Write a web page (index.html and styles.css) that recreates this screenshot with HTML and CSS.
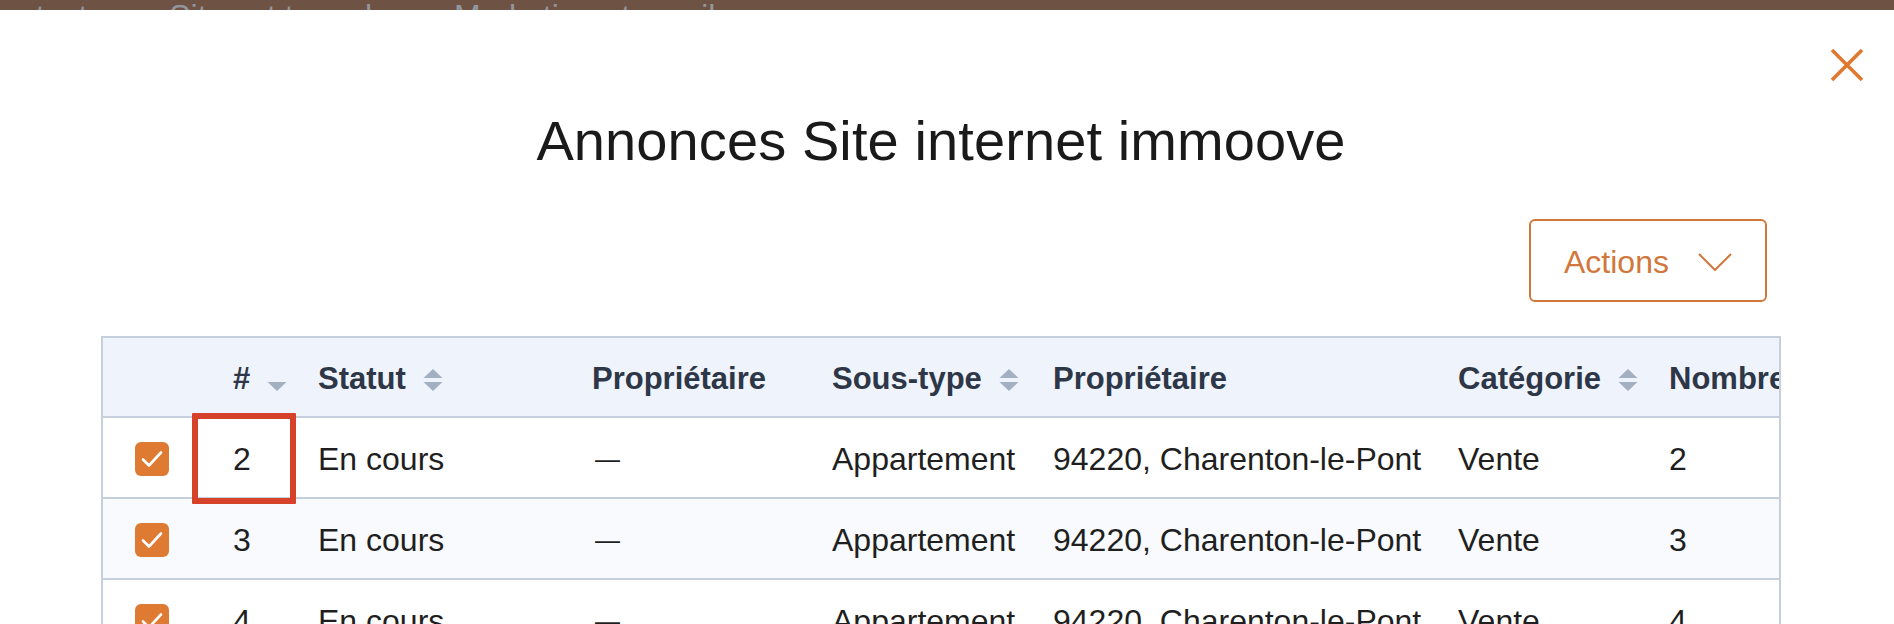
FILE: index.html
```html
<!DOCTYPE html>
<html lang="fr">
<head>
<meta charset="utf-8">
<title>Annonces Site internet immoove</title>
<link rel="stylesheet" href="styles.css">
</head>
<body>
<div class="topbar">
  <nav class="nav">
    <span class="nav-item">Contacts <span class="caret">▾</span></span>
    <span class="nav-item">Sites et tunnels <span class="caret">▾</span></span>
    <span class="nav-item">Marketing et emails <span class="caret">▾</span></span>
  </nav>
</div>
<div class="modal">
  <button class="close" aria-label="Fermer">
    <svg width="34" height="34" viewBox="0 0 34 34"><path d="M2 2 L32 32 M32 2 L2 32" stroke="#e0782f" stroke-width="3.6" stroke-linecap="butt" fill="none"/></svg>
  </button>
  <div class="content">
    <h1 class="title">Annonces Site internet immoove</h1>
    <div class="toolbar">
      <button class="actions">
        <span>Actions</span>
        <svg class="chev" width="34" height="18" viewBox="0 0 34 18"><path d="M1 1 L17 17 L33 1" stroke="#d2773c" stroke-width="2" fill="none"/></svg>
      </button>
    </div>
    <div class="table-area">
      <div class="table-wrap">
        <table class="grid">
          <colgroup>
            <col class="c-check"><col class="c-num"><col class="c-statut"><col class="c-prop"><col class="c-sous"><col class="c-prop2"><col class="c-cat"><col class="c-nb">
          </colgroup>
          <thead>
            <tr>
              <th></th>
              <th>#<svg class="sort" width="20" height="24" viewBox="0 0 20 24"><path d="M0.5 14 L19.5 14 L10 23 Z" fill="#a3b0c2"/></svg></th>
              <th>Statut<svg class="sort" width="20" height="24" viewBox="0 0 20 24"><path d="M10 1 L19.5 10 L0.5 10 Z" fill="#a3b0c2"/><path d="M0.5 14 L19.5 14 L10 23 Z" fill="#a3b0c2"/></svg></th>
              <th>Propriétaire</th>
              <th>Sous-type<svg class="sort" width="20" height="24" viewBox="0 0 20 24"><path d="M10 1 L19.5 10 L0.5 10 Z" fill="#a3b0c2"/><path d="M0.5 14 L19.5 14 L10 23 Z" fill="#a3b0c2"/></svg></th>
              <th>Propriétaire</th>
              <th>Catégorie<svg class="sort" width="20" height="24" viewBox="0 0 20 24"><path d="M10 1 L19.5 10 L0.5 10 Z" fill="#a3b0c2"/><path d="M0.5 14 L19.5 14 L10 23 Z" fill="#a3b0c2"/></svg></th>
              <th>Nombre de pièces</th>
            </tr>
          </thead>
          <tbody>
            <tr>
              <td><span class="cb"><svg width="34" height="34" viewBox="0 0 34 34"><path d="M8 17.5 L14 23.5 L26 10.5" stroke="#fff" stroke-width="2.6" fill="none" stroke-linecap="round" stroke-linejoin="round"/></svg></span></td>
              <td>2</td><td>En cours</td><td><span class="dash">—</span></td><td>Appartement</td><td>94220, Charenton-le-Pont</td><td>Vente</td><td>2</td>
            </tr>
            <tr class="alt">
              <td><span class="cb"><svg width="34" height="34" viewBox="0 0 34 34"><path d="M8 17.5 L14 23.5 L26 10.5" stroke="#fff" stroke-width="2.6" fill="none" stroke-linecap="round" stroke-linejoin="round"/></svg></span></td>
              <td>3</td><td>En cours</td><td><span class="dash">—</span></td><td>Appartement</td><td>94220, Charenton-le-Pont</td><td>Vente</td><td>3</td>
            </tr>
            <tr>
              <td><span class="cb"><svg width="34" height="34" viewBox="0 0 34 34"><path d="M8 17.5 L14 23.5 L26 10.5" stroke="#fff" stroke-width="2.6" fill="none" stroke-linecap="round" stroke-linejoin="round"/></svg></span></td>
              <td>4</td><td>En cours</td><td><span class="dash">—</span></td><td>Appartement</td><td>94220, Charenton-le-Pont</td><td>Vente</td><td>4</td>
            </tr>
          </tbody>
        </table>
      </div>
      <div class="annot"></div>
    </div>
  </div>
</div>
</body>
</html>
```
FILE: styles.css
```css
* { box-sizing: border-box; }
html, body { margin: 0; padding: 0; }
body {
  width: 1894px;
  height: 624px;
  overflow: hidden;
  background: #fff;
  font-family: "Liberation Sans", Arial, Helvetica, sans-serif;
  color: #1f1f1f;
}
.topbar {
  height: 10px;
  background: #6e5344;
  overflow: hidden;
}
.nav {
  display: flex;
  gap: 46px;
  margin-left: -23px;
  font-size: 32px;
  line-height: 32px;
  color: #9297a0;
  white-space: nowrap;
}
.caret { font-family: "DejaVu Sans", sans-serif; font-size: 22px; }
.modal {
  position: relative;
  height: 614px;
  background: #fff;
  overflow: hidden;
}
.close {
  position: absolute;
  left: 1830px;
  top: 38px;
  width: 34px;
  height: 34px;
  padding: 0;
  border: 0;
  background: none;
}
.close svg { display: block; }
.content {
  width: 1680px;
  margin-left: 101px;
  padding-top: 99px;
}
.title {
  margin: 0;
  text-align: center;
  font-weight: 400;
  font-size: 56px;
  line-height: 64px;
  color: #1a1a1a;
  letter-spacing: 0.1px;
}
.toolbar {
  display: flex;
  justify-content: flex-end;
  padding-top: 46px;
  padding-right: 14px;
}
.actions {
  display: flex;
  align-items: center;
  gap: 29px;
  width: 238px;
  height: 83px;
  padding: 4px 0 0 33px;
  border: 2px solid #d2773c;
  border-radius: 6px;
  background: #fff;
  font-family: "Liberation Sans", Arial, sans-serif;
  font-size: 32px;
  color: #d2773c;
}
.chev { display: block; margin-top: -2px; }
.table-area {
  position: relative;
  margin-top: 34px;
}
.table-wrap {
  width: 1680px;
  height: 300px;
  border: 2px solid #c6cfdd;
  border-bottom: 0;
  overflow: hidden;
}
.grid {
  width: 1960px;
  table-layout: fixed;
  border-collapse: separate;
  border-spacing: 0;
  font-size: 32px;
}
.c-check { width: 113px; }
.c-num { width: 85px; }
.c-statut { width: 274px; }
.c-prop { width: 240px; }
.c-sous { width: 221px; }
.c-prop2 { width: 405px; }
.c-cat { width: 211px; }
.c-nb { width: 411px; }
.grid th, .grid td {
  padding: 3px 0 0 17px;
  text-align: left;
  vertical-align: middle;
  white-space: nowrap;
  border-bottom: 2px solid #c6cfdd;
}
.grid th {
  height: 80px;
  background: #eff3fb;
  font-size: 31px;
  font-weight: 700;
  color: #2d3748;
}
.grid td {
  height: 81px;
  color: #1f1f1f;
}
.grid th:first-child, .grid td:first-child { padding-left: 32px; }
.grid tr.alt td { background: #f8fafd; }
.sort {
  display: inline-block;
  vertical-align: -3px;
  margin-left: 17px;
}
.cb {
  display: block;
  width: 34px;
  height: 34px;
  border-radius: 6px;
  background: #df7a33;
}
.cb svg { display: block; }
.dash {
  display: inline-block;
  margin-left: 3px;
  font-size: 25px;
  vertical-align: 2px;
}
.annot {
  position: absolute;
  left: 91px;
  top: 77px;
  width: 104px;
  height: 91px;
  border: 6px solid #d6412a;
  border-radius: 1px;
  pointer-events: none;
}
```
